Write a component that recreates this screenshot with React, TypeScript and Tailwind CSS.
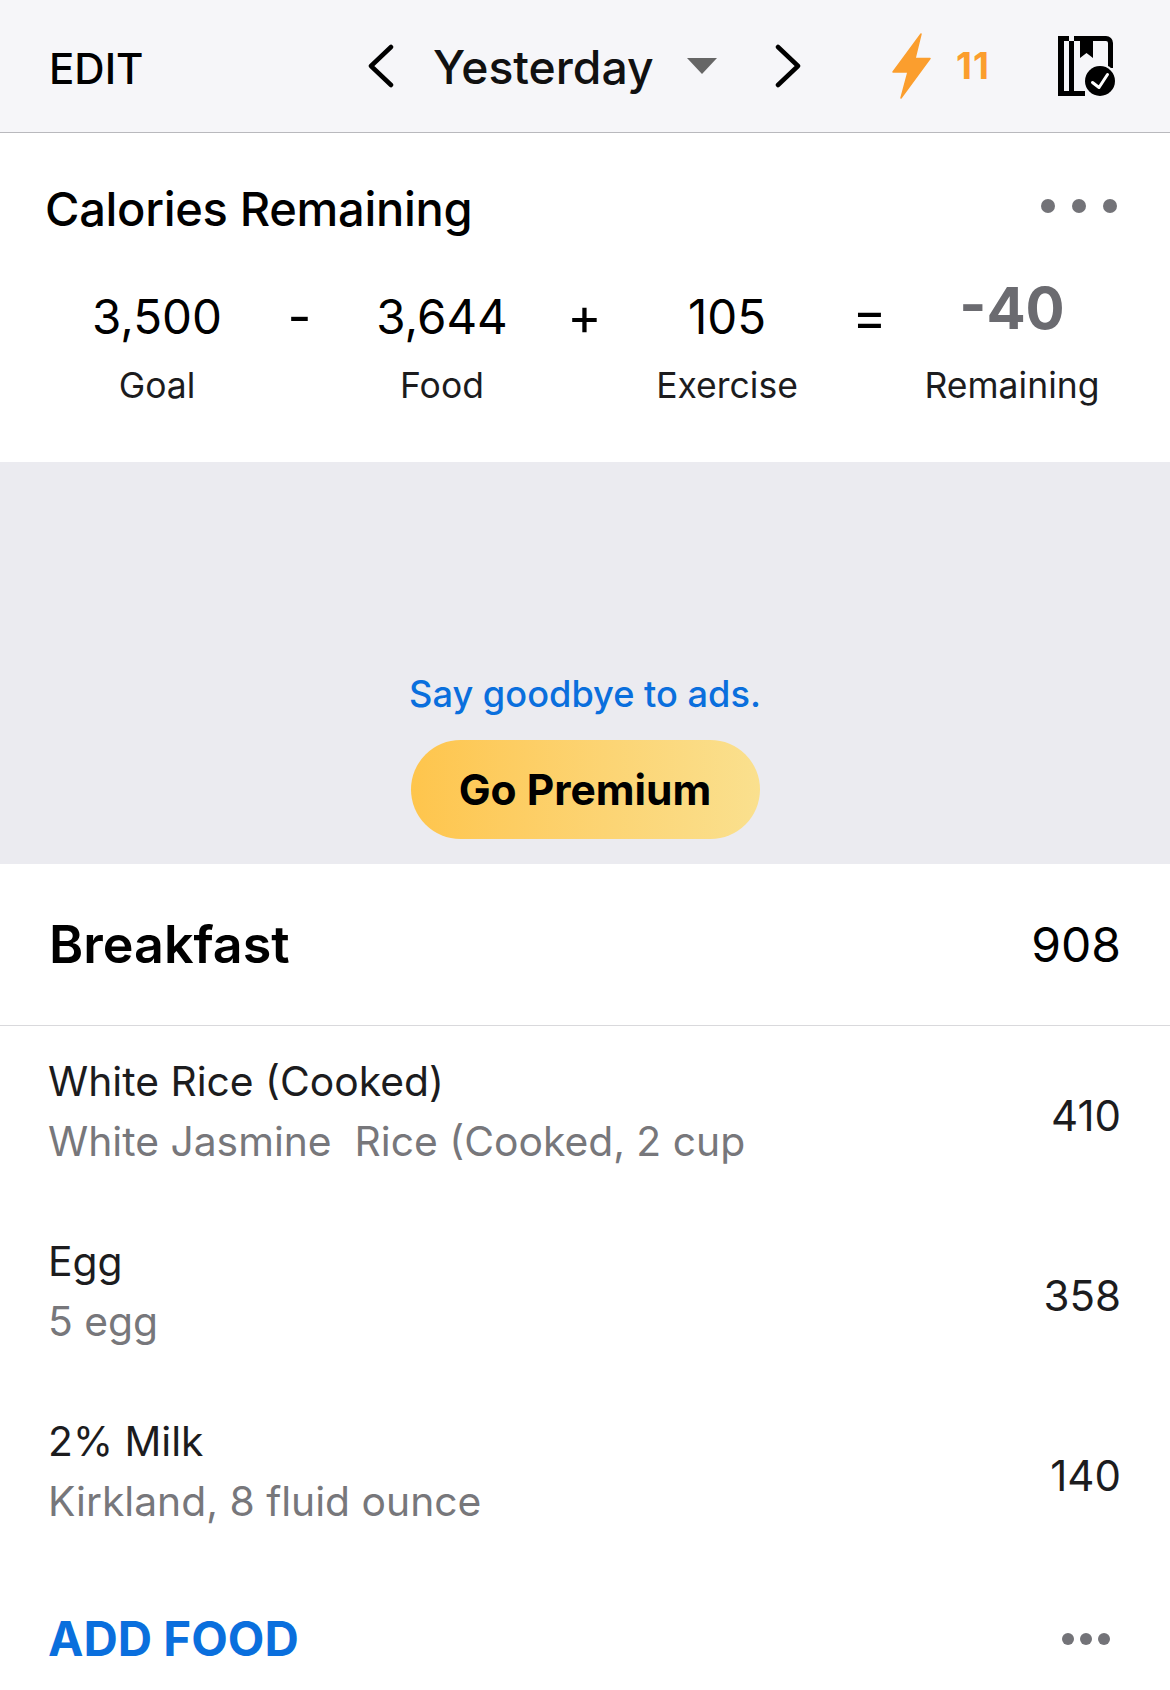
const font = { fontFamily: "Inter, 'Noto Sans', sans-serif" };

function Chevron({ right = false }: { right?: boolean }) {
  return (
    <svg width="28" height="44" viewBox="0 0 28 44" fill="none" aria-hidden="true">
      <path
        d={right ? "M4 3l20 19L4 41" : "M24 3L4 22l20 19"}
        stroke="#000"
        strokeWidth="4.5"
        strokeLinecap="round"
        strokeLinejoin="round"
      />
    </svg>
  );
}

function Bolt() {
  return (
    <svg width="39" height="66" viewBox="0 0 39 66" aria-hidden="true">
      <path
        d="M29 1L1 39H16L9 65L38 25.5H23Z"
        fill="#fb9e2e"
        stroke="#fb9e2e"
        strokeWidth="1.5"
        strokeLinejoin="round"
      />
    </svg>
  );
}

function DiaryIcon() {
  return (
    <svg width="57" height="60" viewBox="0 0 57 60" aria-hidden="true">
      <path
        d="M0 0H48a7 7 0 0 1 7 7V32H50V7a2 2 0 0 0-2-2H6V55H11V0H16V55H27V60H0Z"
        fill="#000"
        fillRule="evenodd"
      />
      <path d="M22 0H35V22L28.500 17L22 22Z" fill="#000" />
      <circle cx="42" cy="45" r="17" fill="#f6f6f9" />
      <circle cx="42" cy="45" r="15" fill="#000" />
      <path
        d="M34.500 46.500L41 51.500L49.500 38.500"
        fill="none"
        stroke="#fff"
        strokeWidth="3"
        strokeLinecap="round"
        strokeLinejoin="round"
      />
    </svg>
  );
}

function Stat({ value, label, big = false }: { value: string; label: string; big?: boolean }) {
  return (
    <div className="flex flex-col items-center">
      <div
        className={
          big
            ? "h-[68px] -mt-[9px] mb-[9px] text-[58px] leading-[68px] font-bold text-[#6b6b70]"
            : "h-[68px] text-[47.500px] leading-[68px] text-black"
        }
      >
        {value}
      </div>
      <div className="mt-[11px] text-[35.500px] leading-[48px] text-[#1c1c1e]">{label}</div>
    </div>
  );
}

function Op({ children }: { children: string }) {
  return <div className="h-[68px] text-center text-[52px] leading-[68px] text-black">{children}</div>;
}

function FoodRow({ name, detail, cal }: { name: string; detail: string; cal: string }) {
  return (
    <div className="flex h-[180px] items-start justify-between pl-[48px] pr-[49px] pt-[29px]">
      <div>
        <div className="text-[40.800px] leading-[52px] text-[#1c1c1e]">{name}</div>
        <div className="mt-[8px] whitespace-pre text-[40.800px] leading-[52px] text-[#77777b]">{detail}</div>
      </div>
      <div className="mt-[35px] text-[42px] leading-[52px] text-[#1c1c1e]">{cal}</div>
    </div>
  );
}

export default function App() {
  return (
    <div className="h-[1690px] w-[1170px] overflow-hidden bg-white" style={font}>
      <header className="flex h-[133px] items-center border-b border-[#b9b9bd] bg-[#f6f6f9]">
        <div className="ml-[49px] mt-[6px] w-[318px] text-[42px] font-medium leading-[52px] text-black">EDIT</div>
        <div className="flex items-center">
          <Chevron />
          <div className="ml-[38px] mt-[2px] w-[221px] text-[46.300px] font-[450] leading-[60px] text-[#111]">Yesterday</div>
          <div className="ml-[33px] h-0 w-0 border-x-[15px] border-t-[16px] border-x-transparent border-t-[#666]" />
          <div className="ml-[57px]">
            <Chevron right />
          </div>
        </div>
        <div className="ml-[90px]">
          <Bolt />
        </div>
        <div className="ml-[25px] w-[34px] text-[37px] font-bold leading-[44px] tracking-[1px] text-[#fb9e2e]">11</div>
        <div className="ml-[68px]">
          <DiaryIcon />
        </div>
      </header>

      <section className="h-[329px]">
        <div className="flex items-start justify-between pl-[45px] pr-[53px] pt-[46px]">
          <h2 className="text-[47px] font-[450] leading-[60px] tracking-[-0.3px] text-black">Calories Remaining</h2>
          <div className="mt-[20px] flex gap-[17px]">
            <span className="size-[14px] rounded-full bg-[#737378]" />
            <span className="size-[14px] rounded-full bg-[#737378]" />
            <span className="size-[14px] rounded-full bg-[#737378]" />
          </div>
        </div>
        <div className="mt-[44px] grid grid-cols-[200px_85px_200px_85px_200px_85px_200px] pl-[57px]">
          <Stat value="3,500" label="Goal" />
          <Op>-</Op>
          <Stat value="3,644" label="Food" />
          <Op>+</Op>
          <Stat value="105" label="Exercise" />
          <Op>=</Op>
          <Stat value="-40" label="Remaining" big />
        </div>
      </section>

      <section className="flex h-[402px] flex-col items-center bg-[#ebebf0] pt-[209px]">
        <div className="text-[36.200px] font-[450] leading-[46px] text-[#0a6fdd]">Say goodbye to ads.</div>
        <div className="mt-[23px] flex h-[99px] w-[349px] items-center justify-center rounded-full bg-gradient-to-r from-[#fec54c] to-[#fae08e] text-[42.500px] font-bold text-black">
          Go Premium
        </div>
      </section>

      <section className="flex h-[162px] items-center justify-between border-b border-[#d9d9dc] pl-[49px] pr-[49px]">
        <h2 className="text-[52px] font-semibold leading-[64px] text-black">Breakfast</h2>
        <div className="text-[48px] leading-[60px] text-black">908</div>
      </section>

      <FoodRow name="White Rice (Cooked)" detail="White Jasmine  Rice (Cooked, 2 cup" cal="410" />
      <FoodRow name="Egg" detail="5 egg" cal="358" />
      <FoodRow name="2% Milk" detail="Kirkland, 8 fluid ounce" cal="140" />

      <div className="flex items-center justify-between pl-[48px] pr-[60px] pt-[43px]">
        <div className="text-[47.500px] font-bold leading-[60px] text-[#0a6fdd]">ADD FOOD</div>
        <div className="flex gap-[6px]">
          <span className="size-[12px] rounded-full bg-[#737378]" />
          <span className="size-[12px] rounded-full bg-[#737378]" />
          <span className="size-[12px] rounded-full bg-[#737378]" />
        </div>
      </div>
    </div>
  );
}
